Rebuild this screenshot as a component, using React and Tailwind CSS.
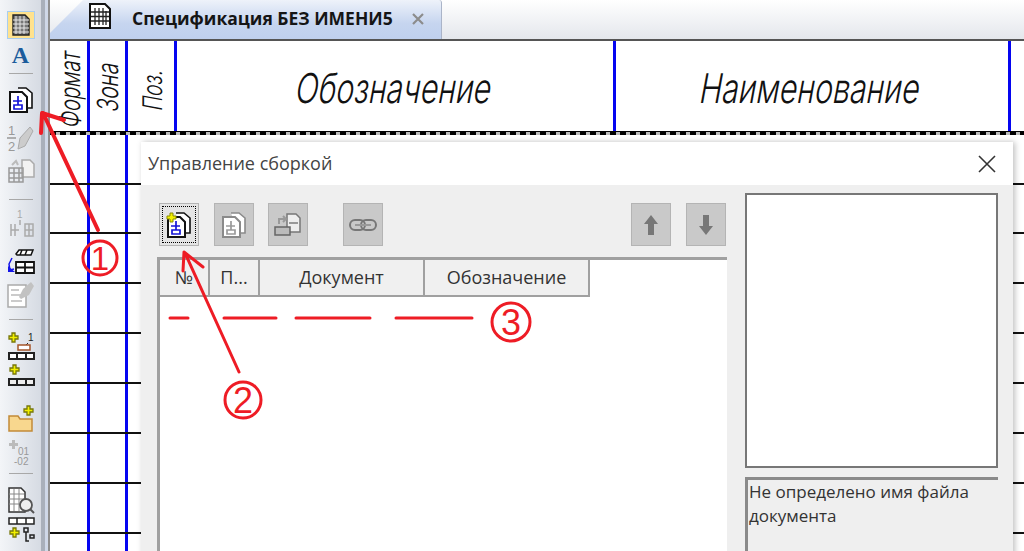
import React from "react";

const cols = ["w-[40px]", "w-[38px]", "w-[49px]", "w-[439px]", "w-[395px]"];

function DocStack({ plus, gray }) {
  const k = gray ? "#8a8a8a" : "#111";
  const b = gray ? "#9a9a9a" : "#1414d8";
  return (
    <svg width="26" height="26" viewBox="0 0 26 26" fill="none">
      <path d="M10 1h8l6 5v15h-6" fill="#fff" stroke={k} strokeWidth="1.600" />
      <path d="M2 5h12l5 5v15H2z" fill="#fff" stroke={k} strokeWidth="2" />
      <path d="M10 9v5M5 14h9M6 18h8v4H6zM10 14v4" stroke={b} strokeWidth="1.700" />
      {plus && <path d="M4 1h3v3h3v3H7v3H4V7H1V4h3z" fill="#f2f000" stroke="#8a8a00" strokeWidth="1" />}
    </svg>
  );
}

function SpecIcon() {
  return (
    <svg width="24" height="26" viewBox="0 0 24 26" fill="none">
      <path d="M2 1h15l5 5v19H2z" fill="#fff" stroke="#111" strokeWidth="2" />
      <path d="M7 5v17M11 5v17M15 5v17M18 8v14M3 9h18M3 13.500h18M3 18h18" stroke="#222" strokeWidth="1.300" />
    </svg>
  );
}

function Plus({ c = "#f2f000", s = "#77770a" }) {
  return <path d="M5 1h3v3h3v3H8v3H5V7H2V4h3z" fill={c} stroke={s} strokeWidth="1.300" />;
}

const tools = [
  { h: 32, el: (
    <div className="w-[28px] h-[28px] bg-[#ffe28d] border border-[#a8cdf0] flex items-center justify-center">
      <svg width="20" height="22" viewBox="0 0 20 22"><path d="M2 1h12l4 4v16H2z" fill="#777" stroke="#222" strokeWidth="1.400" /><path d="M5 2v18M9 2v18M13 2v18M2 6h16M2 10h16M2 14h16M2 18h16" stroke="#e8e8e8" strokeWidth="1" /></svg>
    </div>) },
  { h: 28, el: <span className="text-[24px] leading-none font-bold text-[#1c5c9c] font-['Liberation_Serif',serif]">A</span> },
  { h: 2, mt: 4, mb: 9, sep: true },
  { h: 34, el: <DocStack /> },
  { h: 36, mt: 3, el: (
    <svg width="28" height="30" viewBox="0 0 28 30" fill="none"><text x="1" y="12" fontSize="13" fill="#999" fontFamily="Liberation Sans">1</text><path d="M0 15h9" stroke="#999" strokeWidth="1.500" /><text x="1" y="28" fontSize="13" fill="#999" fontFamily="Liberation Sans">2</text><path d="M11 26l2-11 10-11 3 4-8 15z" fill="#ccc" stroke="#aaa" /></svg>) },
  { h: 32, el: (
    <svg width="28" height="26" viewBox="0 0 28 26" fill="none"><path d="M15 1h8l4 4v13H15z" fill="#f2f2f2" stroke="#aaa" strokeWidth="1.500" /><path d="M2 9h14v14H2zM2 14h14M2 19h14M7 9v14M12 9v14" stroke="#999" strokeWidth="1.500" /><path d="M5 6l4-4 2 4" stroke="#bbb" strokeWidth="2" /></svg>) },
  { h: 2, mt: 11, mb: 5, sep: true },
  { h: 38, el: (
    <svg width="28" height="30" viewBox="0 0 28 30" fill="none"><text x="10" y="9" fontSize="10" fill="#aaa" fontFamily="Liberation Sans">1</text><path d="M13 11v5M4 15v12M8 15v12M4 21h8M18 15h8v12h-8zM22 15v12M18 21h8" stroke="#aaa" strokeWidth="1.500" /></svg>) },
  { h: 32, mt: 3, el: (
    <svg width="28" height="26" viewBox="0 0 28 26" fill="none"><path d="M9 5l3-4h14l-2 5H10zM15 1l-2 5M20 1l-2 5" fill="#fff" stroke="#111" strokeWidth="1.500" /><path d="M9 13h18v11H9zM9 18.500h18M18 13v11" fill="#fff" stroke="#111" strokeWidth="1.800" /><path d="M5 9l-3 6 1 6 4-1" stroke="#1414e8" strokeWidth="1.500" /><path d="M1 17l7 6H1z" fill="#1414e8" /></svg>) },
  { h: 34, el: (
    <svg width="28" height="26" viewBox="0 0 28 26" fill="none"><path d="M1 3h18v22H1z" fill="#fff" stroke="#aaa" strokeWidth="1.500" /><path d="M4 8h8M4 13h10M4 19h11" stroke="#bbb" strokeWidth="1.500" /><path d="M12 15l4-8 8-7 3 4-5 9-8 4z" fill="#c2c2c2" /></svg>) },
  { h: 2, mt: 7, mb: 11, sep: true },
  { h: 30, el: (
    <svg width="28" height="28" viewBox="0 0 28 28" fill="none"><Plus /><text x="21" y="9" fontSize="10" fill="#222" fontFamily="Liberation Sans">1</text><path d="M21 11l-3 3" stroke="#222" /><rect x="11" y="13" width="12" height="5" fill="#fff" stroke="#a5562a" strokeWidth="1.500" /><path d="M2 21h25v6H2zM10 21v6M19 21v6" fill="#fff" stroke="#222" strokeWidth="2" /></svg>) },
  { h: 30, el: (
    <svg width="28" height="24" viewBox="0 0 28 24" fill="none"><g transform="translate(1 0)"><Plus /></g><path d="M2 15h25v6H2zM10 15v6M19 15v6" fill="#eee" stroke="#222" strokeWidth="2" /></svg>) },
  { h: 34, mt: 11, el: (
    <svg width="28" height="28" viewBox="0 0 28 28" fill="none"><path d="M2 11h9l2 3h12v12H2z" fill="#f8d78e" stroke="#c28b38" strokeWidth="1.500" /><g transform="translate(15 0)"><Plus /></g></svg>) },
  { h: 34, el: (
    <svg width="28" height="28" viewBox="0 0 28 28" fill="none"><path d="M5 1h3v3h3v3H8v3H5V7H2V4h3z" fill="#bbb" /><text x="11" y="16" fontSize="10" fill="#999" fontFamily="Liberation Sans">01</text><text x="7" y="26" fontSize="10" fill="#999" fontFamily="Liberation Sans">-02</text></svg>) },
  { h: 2, mt: 3, mb: 12, sep: true },
  { h: 30, el: (
    <svg width="28" height="28" viewBox="0 0 28 28" fill="none"><path d="M2 1h12l4 4v20H2z" fill="#fff" stroke="#333" strokeWidth="1.500" /><path d="M2 7h15M2 12h15M2 17h15M7 2v22M12 2v22" stroke="#888" /><circle cx="19" cy="18" r="6" fill="#eee" stroke="#555" strokeWidth="1.800" /><path d="M23 22l4 4" stroke="#555" strokeWidth="2" /></svg>) },
  { h: 30, el: (
    <svg width="28" height="28" viewBox="0 0 28 28" fill="none"><path d="M2 1h25v6H2zM10 1v6M19 1v6" fill="#fff" stroke="#222" strokeWidth="1.500" /><g transform="translate(1 10)"><Plus /></g><path d="M17 11h4v4h-4zM19 15v9h3M23 18h4v3h-4z" stroke="#222" strokeWidth="1.500" /></svg>) },
];

function Toolbar() {
  return (
    <div className="w-[41px] shrink-0 h-full flex flex-col items-center bg-gradient-to-r from-[#f3f5f8] to-[#d6dbe3] pt-[9px]">
      {tools.map((t, i) =>
        t.sep ? (
          <div key={i} style={{ marginTop: t.mt, marginBottom: t.mb }} className="w-[24px] h-[1px] shrink-0 bg-[#a8a8a8]" />
        ) : (
          <div key={i} style={{ height: t.h, marginTop: t.mt || 0 }} className="shrink-0 flex items-center justify-center">
            {t.el}
          </div>
        )
      )}
    </div>
  );
}

const draft = "leading-none text-[#111] font-['Inter',sans-serif] font-light whitespace-nowrap -skew-x-[14deg]";

function HeaderCell({ i, children }) {
  return (
    <div className={`${cols[i]} shrink-0 border-r-[3px] border-[#0505f0] flex items-center justify-center overflow-visible`}>
      {children}
    </div>
  );
}

function Sheet() {
  return (
    <div className="flex-1 border-t-2 border-[#555] min-h-0 overflow-hidden bg-white">
      <div className="h-[91px] flex border-b border-black">
        <HeaderCell i={0}><span className={`${draft} text-[28px] -rotate-90 scale-x-[0.72] translate-y-[3px] translate-x-[1px]`}>Формат</span></HeaderCell>
        <HeaderCell i={1}><span className={`${draft} text-[29px] -rotate-90 scale-x-[0.72] translate-y-[0px]`}>Зона</span></HeaderCell>
        <HeaderCell i={2}><span className={`${draft} text-[27px] -rotate-90 scale-x-[0.72] translate-y-[3px] translate-x-[1px]`}>Поз.</span></HeaderCell>
        <HeaderCell i={3}><span className={`${draft} text-[41px] scale-x-[0.74] translate-y-[2px] -translate-x-[1px]`}>Обозначение</span></HeaderCell>
        <HeaderCell i={4}><span className={`${draft} text-[41px] scale-x-[0.74] translate-y-[2px] -translate-x-[1px]`}>Наименование</span></HeaderCell>
        <div className="flex-1" />
      </div>
      <div className="h-[3px] bg-[repeating-linear-gradient(90deg,#000_0_6px,#bbb_6px_10px)]" />
      {[50, 49, 50, 50, 50, 50, 50, 50, 50].map((h, r) => (
        <div key={r} style={{ height: h }} className="flex border-b-2 border-[#111] box-border">
          {cols.slice(0, 2).map((c, i) => (
            <div key={i} className={`${c} shrink-0 border-r-[3px] border-[#0505f0]`} />
          ))}
        </div>
      ))}
    </div>
  );
}

function TabBar() {
  return (
    <div className="h-[39px] shrink-0 flex flex-col bg-gradient-to-b from-white to-[#e4e7ec]">
      <div className="h-[39px] w-[392px] pl-[38px] bg-gradient-to-b from-[#eef2fa] via-[#c6d5ef] via-[60%] to-[#bfd0ee] border-r border-[#aab4c8] rounded-tr-[3px] flex items-start pt-[3px] [clip-path:polygon(33px_0,100%_0,100%_100%,0_100%,0_33px)]">
        <SpecIcon />
        <span className="ml-[20px] mt-[3px] text-[17.500px] leading-[24px] font-bold text-[#151515] font-['Open_Sans',sans-serif] whitespace-nowrap">Спецификация БЕЗ ИМЕНИ5</span>
        <svg className="ml-[19px] mt-[10px]" width="12" height="12" viewBox="0 0 12 12"><path d="M1 1l10 10M11 1L1 11" stroke="#8c8c8c" strokeWidth="2.200" /></svg>
      </div>
    </div>
  );
}

function ToolBtn({ children, focused, className = "" }) {
  return (
    <div className={`w-[40px] h-[43px] shrink-0 flex items-center justify-center border border-[#b4b4b4] bg-[#c9c9c9] ${focused ? "bg-[#e4e4e4] outline-1 outline-dotted outline-black -outline-offset-[4px]" : ""} ${className}`}>
      {children}
    </div>
  );
}

function Dialog() {
  const ui = "font-['Open_Sans',sans-serif]";
  return (
    <div className={`absolute left-[141px] top-[142px] w-[872px] h-[420px] bg-[#efefef] shadow-[2px_0_6px_rgba(0,0,0,0.25)] flex flex-col ${ui}`}>
      <div className="h-[43px] shrink-0 bg-white flex items-center justify-between pl-[7px] pr-[16px]">
        <span className="text-[18px] text-[#444]">Управление сборкой</span>
        <svg width="20" height="20" viewBox="0 0 20 20"><path d="M2 2l16 16M18 2L2 18" stroke="#333" strokeWidth="1.600" /></svg>
      </div>
      <div className="flex flex-1 min-h-0 pl-[16px] pr-[15px]">
        <div className="w-[570px] pt-[18px] flex flex-col">
          <div className="flex pl-[2px]">
            <ToolBtn focused><DocStack plus /></ToolBtn>
            <ToolBtn className="ml-[15px]"><DocStack gray /></ToolBtn>
            <ToolBtn className="ml-[14px]">
              <svg width="28" height="26" viewBox="0 0 28 26" fill="none"><path d="M13 2h9l4 4v14H13z" fill="#eee" stroke="#777" strokeWidth="1.500" /><path d="M15 11h9" stroke="#999" strokeWidth="2" /><path d="M1 15h15v8H1z" fill="#bbb" stroke="#666" strokeWidth="1.500" /><path d="M5 12V7h6M9 4l3 3-3 3" stroke="#999" strokeWidth="2" /></svg>
            </ToolBtn>
            <ToolBtn className="ml-[35px]">
              <svg width="28" height="14" viewBox="0 0 28 14" fill="none"><rect x="1" y="2" width="15" height="10" rx="5" stroke="#777" strokeWidth="2" /><rect x="12" y="2" width="15" height="10" rx="5" stroke="#777" strokeWidth="2" /><path d="M6 7h16" stroke="#999" strokeWidth="2" /></svg>
            </ToolBtn>
            <ToolBtn className="ml-[248px]">
              <svg width="16" height="22" viewBox="0 0 16 22"><path d="M8 1l7 9h-4v11H5V10H1z" fill="#777" /></svg>
            </ToolBtn>
            <ToolBtn className="ml-[15px]">
              <svg width="16" height="22" viewBox="0 0 16 22"><path d="M8 21l7-9h-4V1H5v11H1z" fill="#777" /></svg>
            </ToolBtn>
          </div>
          <div className="mt-[11px] flex-1 bg-white border-t-[3px] border-l-[3px] border-[#a0a0a0]">
            <div className="flex h-[37px] text-[18px] text-[#333]">
              {[["№", "w-[50px]"], ["П...", "w-[50px]"], ["Документ", "w-[165px]"], ["Обозначение", "w-[165px]"]].map(([t, w]) => (
                <div key={t} className={`${w} shrink-0 bg-[#f0f0f0] border-r-2 border-b-2 border-[#a0a0a0] flex items-center justify-center whitespace-nowrap`}>{t}</div>
              ))}
            </div>
          </div>
        </div>
        <div className="ml-[18px] w-[253px] pt-[8px] flex flex-col">
          <div className="h-[275px] shrink-0 bg-white border-2 border-[#777]" />
          <div className="mt-[9px] flex-1 border-t-[3px] border-l-[3px] border-[#8a8a8a] bg-[#efefef] text-[17px] leading-[24px] text-[#333] pl-[1px]">
            Не определено имя файла
            <br />
            документа
          </div>
        </div>
      </div>
    </div>
  );
}

function Annotations() {
  const red = "#ee1c25";
  const t = { fill: red, fontFamily: "Liberation Sans", textAnchor: "middle" };
  return (
    <svg className="absolute left-0 top-0 pointer-events-none" width="1024" height="551" viewBox="0 0 1024 551" fill="none">
      <g stroke={red} strokeWidth="4" strokeLinecap="round" strokeLinejoin="round">
        <path d="M98 230L43 113M64 120L42 113L41 133" />
        <path strokeWidth="3" d="M239 372L185 253M203 267L184 252L183 271" />
        <path strokeWidth="3" d="M170 318h18M224 318h52M296 318h74M396 318h76" />
      </g>
      <g stroke={red} strokeWidth="3">
        <circle cx="100" cy="258" r="17" />
        <circle cx="243" cy="400" r="18" />
        <circle cx="511" cy="322" r="19" />
      </g>
      <text x="100" y="270" fontSize="33" {...t}>1</text>
      <text x="243" y="413" fontSize="36" {...t}>2</text>
      <text x="511" y="335" fontSize="36" {...t}>3</text>
    </svg>
  );
}

export default function App() {
  return (
    <div className="relative w-[1024px] h-[551px] overflow-hidden flex bg-white">
      <Toolbar />
      <div className="w-[4px] shrink-0 bg-[#a9b0bb]" />
      <div className="w-[5px] shrink-0 bg-[#cfd8e8] border-r-2 border-[#8f8f8f]" />
      <div className="flex-1 flex flex-col min-w-0">
        <TabBar />
        <div className="flex-1 min-h-0 flex flex-col relative">
          <Sheet />
        </div>
      </div>
      <Dialog />
      <Annotations />
    </div>
  );
}
